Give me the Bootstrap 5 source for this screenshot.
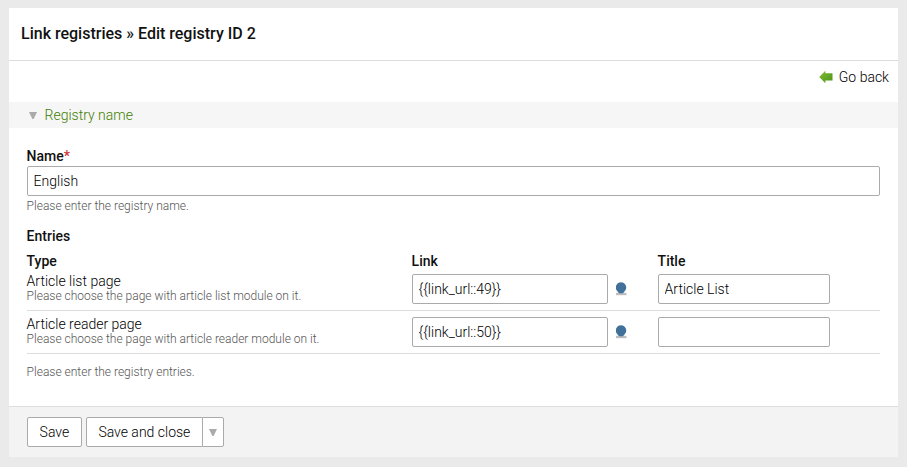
<!DOCTYPE html>
<html lang="en">
<head>
<meta charset="utf-8">
<title>Edit registry</title>
<link href="https://cdn.jsdelivr.net/npm/bootstrap@5.3.0/dist/css/bootstrap.min.css" rel="stylesheet">
<style>
body{background:#eaeaea;font-family:Roboto,sans-serif;font-weight:300;font-size:14px;line-height:20px;color:#000;padding:8px 9px 10px;overflow:hidden}
.panel{height:449px}
h1.headline{font-size:16px;font-weight:500;line-height:51px;height:53px;padding-left:12px;border-bottom:1px solid #ddd;color:#111}
.toolbar-row{height:41px;padding:6px 9px 0 0}
.toolbar-row a{color:#000;gap:6px}
.legend-bar{height:26px;line-height:26px;background:#f6f6f6;color:#3f8000;padding-left:20px;gap:7.5px}
.form-area{padding:18px 18px 0}
.strong{font-weight:500;color:#111}
.strong,.hint,.label-cell{text-indent:-.4px}
.required{color:#c33}
.field{height:30px;padding:0 5.6px;border:1px solid #aaa;border-radius:2px;font-size:14px;font-weight:300;color:#000;line-height:28px}
.hint{font-size:12px;line-height:14px;color:#555}
.name-hint{margin:3px 0 13px}
.entries{display:grid;grid-template-columns:385px 196px 50px 172px 1fr;align-items:start}
.entries-head{height:17px;margin-top:5px}
.entry{height:43px;border-bottom:1px solid #ddd;padding-top:6px}
.entry .label-cell{margin-top:-2px}
.entry .label-cell div:first-child{line-height:18px}
.entry .label-cell .hint{margin-top:-1px}
.entries-hint{margin-top:11px}
.picker{padding:8px 0 0 8px;line-height:0}
.footer-bar{height:51px;background:#f3f3f3;border-top:1px solid #ddd;padding:10px 18px}
.action{height:30px;padding:0 11.6px;border:1px solid #aaa;border-radius:2px;background:#fff;font-size:14px;font-weight:300;line-height:28px;color:#000}
.action.more{width:22px;padding:0;margin-left:-1px}
</style>
<script src="https://cdn.jsdelivr.net/npm/bootstrap@5.3.0/dist/js/bootstrap.bundle.min.js"></script>
</head>
<body>
<main class="panel bg-white d-flex flex-column">
  <h1 class="headline m-0">Link registries » Edit registry ID 2</h1>
  <div class="toolbar-row d-flex justify-content-end align-items-start">
    <a href="#" class="d-flex align-items-center text-decoration-none">
      <svg width="14" height="14" viewBox="0 0 14 14"><defs><linearGradient id="leaf" x2="1" y2="1"><stop stop-color="#83bd35"/><stop offset="1" stop-color="#4b9419"/></linearGradient></defs><path d="M.2 7 6.4.8v2.4h7.1v7.4H6.4v2.6z" fill="url(#leaf)"/></svg>
      <span>Go back</span>
    </a>
  </div>
  <div class="legend-bar d-flex align-items-center">
    <svg width="8" height="7" viewBox="0 0 8 7"><path d="M0 0h8L4.6 7H3.4z" fill="#aaa"/></svg>
    <span>Registry name</span>
  </div>
  <form class="form-area flex-grow-1">
    <label class="strong d-block" for="name">Name<span class="required">*</span></label>
    <input id="name" class="field form-control" value="English">
    <div class="hint name-hint">Please enter the registry name.</div>
    <div class="strong">Entries</div>
    <div class="entries entries-head strong">
      <div>Type</div><div>Link</div><div></div><div>Title</div>
    </div>
    <div class="entries entry">
      <div class="label-cell"><div>Article list page</div><div class="hint">Please choose the page with article list module on it.</div></div>
      <input class="field form-control" value="{{link_url::49}}">
      <div class="picker"><svg width="12" height="14" viewBox="0 0 12 14"><path d="M-.5 10.8h11v2.4h-11z" fill="#bebebe"/><path d="M5 .3a5.2 5.2 0 0 1 4 8.5L7 11.2H3L1 8.8A5.2 5.2 0 0 1 5 .3z" fill="#41709a"/></svg></div>
      <input class="field form-control" value="Article List">
    </div>
    <div class="entries entry">
      <div class="label-cell"><div>Article reader page</div><div class="hint">Please choose the page with article reader module on it.</div></div>
      <input class="field form-control" value="{{link_url::50}}">
      <div class="picker"><svg width="12" height="14" viewBox="0 0 12 14"><path d="M-.5 10.8h11v2.4h-11z" fill="#bebebe"/><path d="M5 .3a5.2 5.2 0 0 1 4 8.5L7 11.2H3L1 8.8A5.2 5.2 0 0 1 5 .3z" fill="#41709a"/></svg></div>
      <input class="field form-control" value="">
    </div>
    <div class="hint entries-hint">Please enter the registry entries.</div>
  </form>
  <div class="footer-bar d-flex gap-1">
    <button class="btn action" type="button">Save</button>
    <div class="btn-group">
      <button class="btn action" type="button">Save and close</button>
      <button class="btn action more d-flex align-items-center justify-content-center" type="button" aria-label="More actions"><svg width="8" height="7" viewBox="0 0 8 7"><path d="M0 0h8L4.6 7H3.4z" fill="#aaa"/></svg></button>
    </div>
  </div>
</main>
</body>
</html>
